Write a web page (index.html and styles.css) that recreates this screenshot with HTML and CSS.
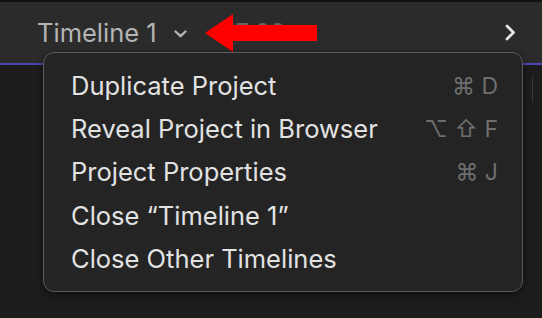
FILE: index.html
```html
<!DOCTYPE html>
<html>
<head>
  <title>Timeline Menu</title>
  <link rel="stylesheet" href="styles.css">
</head>
<body>
<div class="toolbar">
  <div class="project-title">
    <span class="title">Timeline 1</span>
    <svg class="chevron-down" width="13" height="8" viewBox="0 0 13 8"><path d="M1.5 1.5 L6.5 6.2 L11.5 1.5" fill="none" stroke="#b4b4b4" stroke-width="2.4" stroke-linecap="round" stroke-linejoin="round"/></svg>
    <span class="timecode">17:00</span>
  </div>
  <svg class="chevron-right" width="11" height="17" viewBox="0 0 11 17"><path d="M2 2 L8.5 8.5 L2 15" fill="none" stroke="#e6e6e6" stroke-width="2.8" stroke-linecap="round" stroke-linejoin="round"/></svg>
</div>
<div class="timeline-area">
  <div class="ruler-mark"></div>
</div>

<svg class="red-arrow" width="114" height="40" viewBox="0 0 114 40">
  <polygon points="0,19 28,0 28,11 112,11 112,27 28,27 28,38" fill="#ff0000"/>
</svg>

<div class="menu">
  <div class="menu-item"><span>Duplicate Project</span><span class="shortcut">⌘ D</span></div>
  <div class="menu-item"><span>Reveal Project in Browser</span><span class="shortcut">⌥ ⇧ F</span></div>
  <div class="menu-item"><span>Project Properties</span><span class="shortcut">⌘ J</span></div>
  <div class="menu-item"><span>Close “Timeline 1”</span></div>
  <div class="menu-item"><span>Close Other Timelines</span></div>
</div>
</body>
</html>
```

FILE: styles.css
```css
body {
  margin: 0;
  background-color: #1c1c1c;
  font-family: Inter, "Noto Sans", sans-serif;
  width: 542px;
  height: 318px;
  overflow: hidden;
  position: relative;
}

.toolbar {
  height: 61px;
  background-color: #2b2b2b;
  border-top: 2px solid #111;
  border-bottom: 2px solid #4a45b8;
  display: flex;
  align-items: center;
  justify-content: space-between;
  padding: 0 26px 0 37px;
}

.project-title {
  display: flex;
  align-items: center;
  gap: 17px;
}

.title {
  color: #b4b4b4;
  font-size: 25.5px;
}

.chevron-down {
  margin-top: 2px;
}

.timecode {
  color: #666;
  font-size: 24px;
  margin-left: 22px;
}

.timeline-area {
  height: 253px;
  position: relative;
}

.ruler-mark {
  position: absolute;
  left: 532px;
  top: 12px;
  width: 1px;
  height: 24px;
  background-color: #3a3a3a;
}

.red-arrow {
  position: absolute;
  left: 205px;
  top: 14px;
}

.menu {
  position: absolute;
  left: 43px;
  top: 52px;
  width: 478px;
  padding: 11px 0;
  background-color: #242424;
  border: 1px solid #5a5a5a;
  border-radius: 11px;
  box-shadow: 0 2px 6px rgba(0, 0, 0, 0.5);
}

.menu-item {
  height: 43.2px;
  display: flex;
  align-items: center;
  justify-content: space-between;
  padding: 0 24px 0 27px;
  color: #e2e2e2;
  font-size: 25.5px;
}

.shortcut {
  color: #6e6e6e;
  font-size: 23px;
}
```
